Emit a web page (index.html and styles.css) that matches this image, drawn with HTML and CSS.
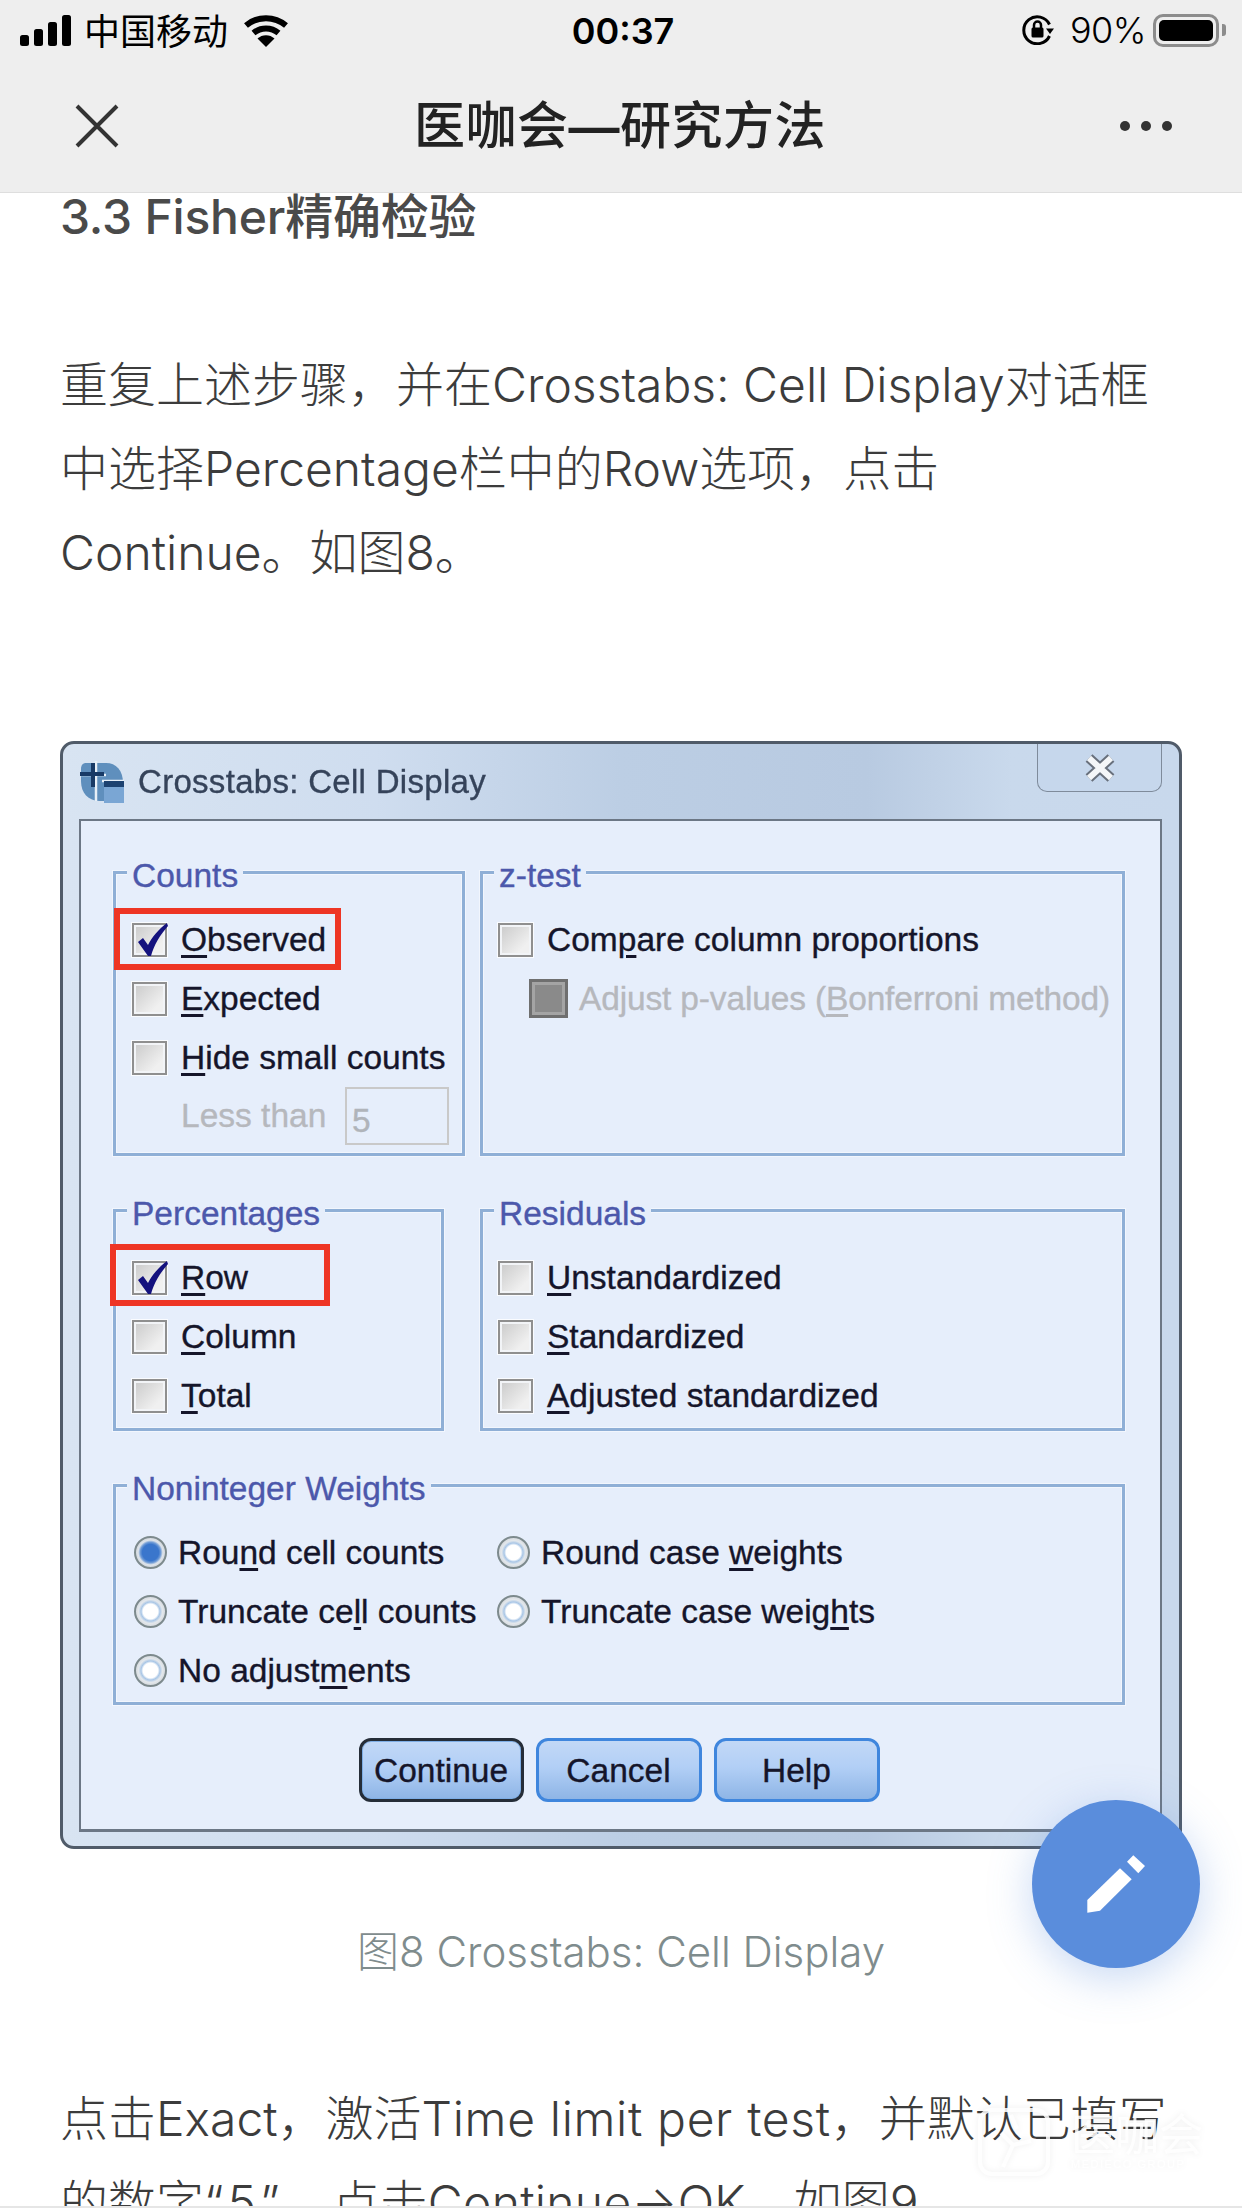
FILE: index.html
```html
<!DOCTYPE html>
<html lang="zh-CN">
<head>
<meta charset="utf-8">
<title>医咖会—研究方法</title>
<link rel="stylesheet" href="styles.css">
</head>
<body>
<div class="page">
  <header class="top">
    <div class="status">
      <div class="status-left">
        <svg class="signal" viewBox="0 0 51 31"><rect x="0" y="20" width="9" height="11" rx="2.5"/><rect x="14" y="14" width="9" height="17" rx="2.5"/><rect x="28" y="7" width="9" height="24" rx="2.5"/><rect x="42" y="0" width="9" height="31" rx="2.5"/></svg>
        <span class="carrier">中国移动</span>
        <svg class="wifi" viewBox="0 0 46 33"><path class="arc" d="M3 11.5A31 31 0 0 1 43 11.5"/><path class="arc" d="M10.500 19A19.500 19.500 0 0 1 35.500 19"/><path class="fan" d="M23 33L14.500 24.500A12.500 12.500 0 0 1 31.500 24.500Z"/></svg>
      </div>
      <div class="time">00:37</div>
      <div class="status-right">
        <svg class="lock" viewBox="0 0 32 30"><path class="ring" d="M27.500 9.500A13.500 13.500 0 1 0 27.500 21"/><path d="M24 13.500H32L28 19Z"/><rect x="9.500" y="12.500" width="12" height="10" rx="1.500"/><path class="shackle" d="M12 13V10A3.500 3.500 0 0 1 19 10V13"/></svg>
        <span class="pct">90%</span>
        <div class="battery"><div class="level"></div></div>
        <div class="tip"></div>
      </div>
    </div>
    <nav class="nav">
      <svg class="close" viewBox="0 0 44 44"><path d="M2 2L42 42M42 2L2 42"/></svg>
      <h1 class="nav-title">医咖会<span class="dash">—</span>研究方法</h1>
      <div class="more"><i></i><i></i><i></i></div>
    </nav>
  </header>

  <main class="article">
    <h2 class="heading">3.3 Fisher精确检验</h2>
    <p class="text">重复上述步骤，并在Crosstabs: Cell Display对话框<br>中选择Percentage栏中的Row选项，点击<br>Continue。如图8。</p>

    <figure class="figure">
      <div class="dialog">
        <div class="titlebar">
          <svg class="app-icon" viewBox="0 0 44 42"><path class="globe" d="M6 2H26C36 2 43 9 43 22V40H20C8 40 1 32 1 20V8C1 4 3 2 6 2Z"/><path class="lines" d="M0 14H26M16 0V40M22 20H44"/><path class="cross" d="M0 13H24M13 2V26" /><rect class="sheet" x="24" y="22" width="20" height="20"/><rect class="sheet-top" x="24" y="20" width="20" height="6"/></svg>
          <span class="win-title">Crosstabs: Cell Display</span>
          <div class="win-close"><svg viewBox="0 0 32 28"><path class="x-out" d="M5 4L27 24M27 4L5 24"/><path class="x-in" d="M5 4L27 24M27 4L5 24"/></svg></div>
        </div>
        <div class="panel">
          <div class="groups">
            <div class="group-row row-a">
              <section class="group counts">
                <span class="legend">Counts</span>
                <div class="row"><span class="cb"><svg class="tick" viewBox="0 0 36 36"><path d="M6 19L11 15L16 22C20 14 27 6 35 0L36 3C28 12 22 22 19 33L16 33Z"/></svg></span><span class="lab"><u>O</u>bserved</span></div>
                <div class="row"><span class="cb"></span><span class="lab"><u>E</u>xpected</span></div>
                <div class="row"><span class="cb"></span><span class="lab"><u>H</u>ide small counts</span></div>
                <div class="less"><span class="less-lab">Less than</span><span class="num">5</span></div>
                <div class="mark mark-obs"></div>
              </section>
              <section class="group wide">
                <span class="legend">z-test</span>
                <div class="row"><span class="cb"></span><span class="lab">Com<u>p</u>are column proportions</span></div>
                <div class="row sub"><span class="cb dark"></span><span class="lab off">Adjust p-values (<u>B</u>onferroni method)</span></div>
              </section>
            </div>
            <div class="group-row row-b">
              <section class="group percents">
                <span class="legend">Percentages</span>
                <div class="row"><span class="cb"><svg class="tick" viewBox="0 0 36 36"><path d="M6 19L11 15L16 22C20 14 27 6 35 0L36 3C28 12 22 22 19 33L16 33Z"/></svg></span><span class="lab"><u>R</u>ow</span></div>
                <div class="row"><span class="cb"></span><span class="lab"><u>C</u>olumn</span></div>
                <div class="row"><span class="cb"></span><span class="lab"><u>T</u>otal</span></div>
                <div class="mark mark-row"></div>
              </section>
              <section class="group wide">
                <span class="legend">Residuals</span>
                <div class="row"><span class="cb"></span><span class="lab"><u>U</u>nstandardized</span></div>
                <div class="row"><span class="cb"></span><span class="lab"><u>S</u>tandardized</span></div>
                <div class="row"><span class="cb"></span><span class="lab"><u>A</u>djusted standardized</span></div>
              </section>
            </div>
            <section class="group nonint">
              <span class="legend">Noninteger Weights</span>
              <div class="radios">
                <div class="row"><span class="rd on"></span><span class="lab">Rou<u>n</u>d cell counts</span></div>
                <div class="row"><span class="rd"></span><span class="lab">Round case <u>w</u>eights</span></div>
                <div class="row"><span class="rd"></span><span class="lab">Truncate ce<u>l</u>l counts</span></div>
                <div class="row"><span class="rd"></span><span class="lab">Truncate case weig<u>h</u>ts</span></div>
                <div class="row"><span class="rd"></span><span class="lab">No adjust<u>m</u>ents</span></div>
              </div>
            </section>
          </div>
          <div class="buttons">
            <div class="btn primary">Continue</div>
            <div class="btn">Cancel</div>
            <div class="btn">Help</div>
          </div>
        </div>
      </div>
      <figcaption class="caption">图8 Crosstabs: Cell Display</figcaption>
    </figure>

    <p class="text">点击Exact，激活<span class="loose">Time limit per test</span>，并默认已填写<br>的数字<span class="quoted">“5”</span>，点击<span class="slight">Continue→OK</span>，如图9。</p>
  </main>
  <div class="bottom-line"></div>

  <div class="watermark">
    <svg class="wm-logo" viewBox="0 0 74 70"><rect x="3" y="3" width="68" height="64" rx="12"/><path d="M26 60L36 38L24 26M36 38L54 34M34 8L40 22"/></svg>
    <div class="wm-text"><div class="wm-name">医咖会</div><div class="wm-sub">MEDIECO GROUP</div></div>
  </div>

  <div class="fab">
    <svg viewBox="0 0 168 168"><path d="M88 68.300L99.700 79.300L68 110.700L55.300 112.700V100Z"/><path d="M101.300 55.300L113 66L106.300 73.300L95 61.700Z"/></svg>
  </div>
</div>
</body>
</html>
```

FILE: styles.css
```css
* { box-sizing: border-box; }
html, body { margin: 0; padding: 0; background: #fff; }
.page {
  position: relative;
  width: 1242px;
  height: 2208px;
  overflow: hidden;
  display: flex;
  flex-direction: column;
  font-family: Inter, "Noto Sans CJK SC", sans-serif;
  color: #444;
}

/* header */
.top { flex: none; background: #eeeeee; border-bottom: 1px solid #dedede; height: 193px; }
.status {
  height: 60px;
  display: grid;
  grid-template-columns: 1fr auto 1fr;
  align-items: center;
  padding: 0 16px 0 20px;
  color: #000;
}
.status-left { display: flex; align-items: center; }
.signal { width: 51px; height: 31px; fill: #000; }
.carrier { font-family: "Noto Sans CJK SC", sans-serif; font-size: 36px; line-height: 40px; margin: 0 0 2px 13px; width: 146px; white-space: nowrap; }
.wifi { width: 46px; height: 33px; margin-left: 13px; }
.wifi .arc { fill: none; stroke: #000; stroke-width: 6; }
.wifi .fan { fill: #000; }
.time { font-size: 36px; font-weight: 600; line-height: 40px; padding-top: 2px; }
.status-right { display: flex; align-items: center; justify-content: flex-end; }
.lock { width: 32px; height: 30px; }
.lock .ring { fill: none; stroke: #000; stroke-width: 3; }
.lock .shackle { fill: none; stroke: #000; stroke-width: 2.500; }
.pct { font-size: 36px; line-height: 40px; margin-left: 16px; font-weight: 300; letter-spacing: -.5px; }
.battery { width: 66px; height: 33px; margin-left: 7px; border: 3px solid #8c8c8c; border-radius: 10px; padding: 3px; }
.level { width: 100%; height: 100%; background: #000; border-radius: 5px; }
.tip { width: 4px; height: 12px; background: #8c8c8c; border-radius: 0 3px 3px 0; margin-left: 3px; }

.nav { height: 132px; display: grid; grid-template-columns: 1fr auto 1fr; align-items: center; padding: 0 70px 0 68px; }
.close { width: 44px; height: 44px; margin-left: 7px; fill: none; stroke: #333; stroke-width: 4; }
.nav-title { margin: -3px 0 0; font-family: "Noto Sans CJK SC", sans-serif; font-size: 51px; font-weight: 500; color: #222; line-height: 64px; letter-spacing: .5px; white-space: nowrap; }
.dash { font-family: "Liberation Sans", sans-serif; font-weight: 700; }
.more { display: flex; gap: 11px; justify-content: flex-end; }
.more i { width: 10px; height: 10px; border-radius: 50%; background: #333; display: block; }

/* article */
.article { flex: 1; min-height: 0; overflow: hidden; padding: 0 0 0 60px; }
.heading { margin: 0 0 102px; font-size: 48px; line-height: 48px; font-weight: 500; letter-spacing: -.2px; color: #4a4a4a; white-space: nowrap; }
.text { margin: 0; font-size: 48px; line-height: 84px; font-weight: 300; color: #3c3c3c; white-space: nowrap; }
.loose { letter-spacing: .66px; }
.quoted { letter-spacing: 4px; }
.slight { letter-spacing: .3px; }
.figure { margin: 146px 0 95px; width: 1122px; }
.caption { margin-top: 73px; text-align: center; font-size: 42px; line-height: 60px; font-weight: 300; color: #7f8c8d; white-space: nowrap; }
.bottom-line { flex: none; height: 2px; background: #e6e6e6; }

/* dialog */
.dialog {
  width: 1122px;
  height: 1108px;
  display: flex;
  flex-direction: column;
  border: 3px solid #505b69;
  border-radius: 14px;
  padding: 0 17px 14px 16px;
  background: #b9cde6;
  background-image: linear-gradient(90deg, #d8e4f2 0, #cfddef 28%, #bccee4 50%, #b8cae1 72%, #c0d1e6 78%, #c9d9ec 85%, #c8d8ec 100%);
  font-family: "Liberation Sans", sans-serif;
  filter: blur(.7px);
  color: #15152a;
  -webkit-text-stroke: .35px currentColor;
}
.titlebar { flex: none; height: 75px; display: flex; align-items: center; padding-left: 1px; }
.app-icon { width: 44px; height: 42px; }
.app-icon .globe { fill: #5f8fbd; }
.app-icon .lines { fill: none; stroke: #e8f0f8; stroke-width: 2.500; }
.app-icon .cross { fill: none; stroke: #183a66; stroke-width: 4; }
.app-icon .sheet { fill: #7aa6d4; }
.app-icon .sheet-top { fill: #1d4270; }
.win-title { margin-left: 14px; font-size: 33px; letter-spacing: .3px; color: #35435a; white-space: nowrap; }
.win-close {
  margin-left: auto;
  align-self: flex-start;
  width: 125px;
  height: 48px;
  display: flex;
  align-items: center;
  justify-content: center;
  background: #c6d7ec;
  border: 1.500px solid #7f8b9b;
  border-top: 0;
  border-radius: 0 0 10px 10px;
}
.win-close svg { width: 32px; height: 28px; fill: none; }
.x-out { stroke: #68707c; stroke-width: 10; }
.x-in { stroke: #f4f6f8; stroke-width: 6; }

.panel {
  flex: 1;
  display: flex;
  flex-direction: column;
  border: 2px solid #6c7785;
  border-bottom-width: 3px;
  background: #e6eefb;
  padding: 50px 35px 0 32px;
}
.groups { display: flex; flex-direction: column; gap: 53px; }
.group-row { display: flex; justify-content: space-between; }
.row-a { height: 285px; }
.row-b { height: 222px; }
.group {
  position: relative;
  border: 3px solid #8fafd6;
  box-shadow: 0 0 0 1px #f2f6fd, inset 0 0 0 1px #f2f6fd;
  padding-top: 36px;
}
.counts { width: 352px; }
.percents { width: 331px; }
.wide { width: 645px; }
.nonint { height: 221px; }
.legend {
  position: absolute;
  top: -16px;
  left: 11px;
  padding: 0 5px;
  font-size: 33.500px;
  line-height: 36px;
  color: #4c58ab;
  background: #e6eefb;
  white-space: nowrap;
}
.row { display: flex; align-items: center; height: 59px; padding-left: 16px; }
.wide .row { padding-left: 15px; }
.wide .sub { padding-left: 46px; }
.cb {
  position: relative;
  flex: none;
  width: 35px;
  height: 34px;
  border: 2px solid #8f8f8f;
  outline: 1px solid #fafcff;
  background: linear-gradient(135deg, #c9c9c9, #f0f0f0 75%);
  box-shadow: inset 0 0 0 2px #f2f4f7;
}
.dark { width: 39px; height: 39px; border: 3px solid #6f6f6f; background: #8a8a8a; box-shadow: inset 0 0 0 3px #a4a4a4; outline: 0; }
.tick { position: absolute; left: -2px; top: -2px; width: 36px; height: 36px; fill: #14127e; }
.lab { margin-left: 14px; font-size: 33.500px; line-height: 40px; white-space: nowrap; }
.lab u { text-decoration-thickness: 3px; text-underline-offset: 4px; }
.off { margin-left: 11px; letter-spacing: -.15px; color: #b6b8bd; }
.less { display: flex; align-items: center; height: 58px; padding-left: 65px; color: #b6b8bd; font-size: 33.500px; }
.less-lab { width: 164px; flex: none; }
.num { width: 104px; height: 58px; border: 2px solid #c9c9c9; padding: 12px 0 0 5px; line-height: 40px; color: #b0b4ba; }
.mark { position: absolute; border: 6px solid #ee3524; }
.mark-obs { left: -2px; top: 34px; width: 227px; height: 62px; }
.mark-row { left: -6px; top: 32px; width: 220px; height: 62px; }

.radios { display: grid; grid-template-columns: 363px auto; padding-left: 3px; }
.radios .row { padding-left: 15px; }
.rd {
  flex: none;
  width: 33px;
  height: 33px;
  border-radius: 50%;
  border: 2px solid #7d8a8d;
  background: radial-gradient(circle, #fff 0 36%, #a9c6e6 46%, #e4e8ec 58%, #b9bfc4 100%);
}
.rd.on { background: radial-gradient(circle, #3a76cc 0 40%, #6f9bd6 50%, #dfe4ea 60%, #b2b8bd 100%); }
.rd + .lab { margin-left: 11px; }

.buttons { display: flex; justify-content: center; gap: 12px; margin-top: 33px; }
.btn {
  width: 166px;
  height: 64px;
  display: flex;
  align-items: center;
  justify-content: center;
  border: 3px solid #3f86dd;
  border-radius: 12px;
  padding-top: 2px;
  background: linear-gradient(180deg, #c2d8f6 0, #b2cff6 45%, #8eb5e6 100%);
  font-size: 33.500px;
  color: #15152a;
}
.primary { border-color: #252d38; width: 165px; box-shadow: inset 0 0 0 1px #7eaee6; }

/* overlays */
.fab {
  position: absolute;
  left: 1032px;
  top: 1800px;
  width: 168px;
  height: 168px;
  border-radius: 50%;
  background: #5a8ddc;
  box-shadow: 0 10px 44px rgba(90, 141, 220, .34);
}
.fab svg { width: 168px; height: 168px; fill: #fff; display: block; }
.watermark {
  position: absolute;
  left: 977px;
  top: 2107px;
  display: flex;
  gap: 20px;
  filter: drop-shadow(0 0 3px rgba(0, 0, 0, .08));
}
.wm-logo { width: 74px; height: 70px; fill: none; stroke: rgba(255, 255, 255, .85); stroke-width: 4; }
.wm-name { font-family: "Noto Sans CJK SC", sans-serif; font-size: 44px; line-height: 50px; color: rgba(255, 255, 255, .85); white-space: nowrap; }
.wm-sub { font-family: "Liberation Sans", sans-serif; font-size: 11px; line-height: 14px; letter-spacing: 1.500px; color: rgba(255, 255, 255, .9); white-space: nowrap; }
```
